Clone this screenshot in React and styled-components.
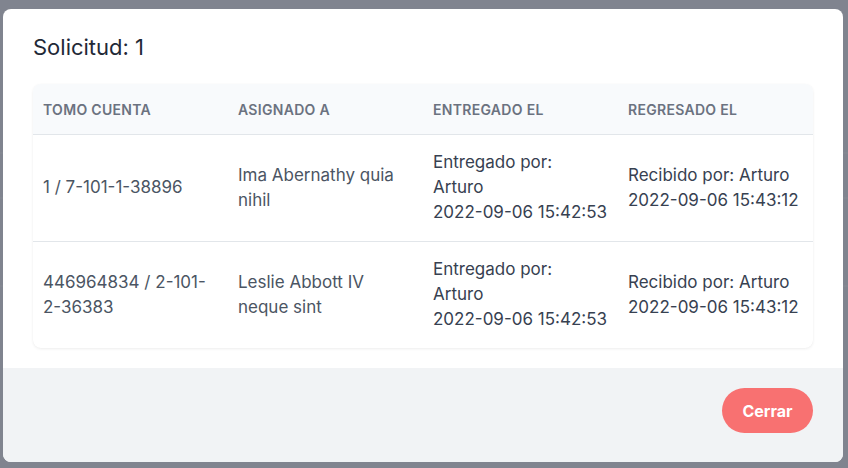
import React from "react";
import styled, { createGlobalStyle } from "styled-components";

const GlobalStyle = createGlobalStyle`
  html, body { margin: 0; padding: 0; width: 848px; height: 468px; overflow: hidden; }
  body { font-family: Inter, "Noto Sans", sans-serif; -webkit-font-smoothing: antialiased; }
  * { box-sizing: border-box; }
`;

const Page = styled.div`
  width: 848px;
  height: 468px;
  background: #e9ebef;
  display: flex;
  flex-direction: column;
  padding-top: 152px;
`;

const BgRow = styled.div`
  height: ${(p) => p.$h}px;
  border-bottom: 2px solid #ffffff;
`;

const Overlay = styled.div`
  position: fixed;
  inset: 0;
  background: rgba(107, 112, 124, 0.84);
  padding: 9px 0 0 3px;
`;

const Modal = styled.div`
  width: 840px;
  height: 453px;
  background: #ffffff;
  border-radius: 8px;
  overflow: hidden;
  display: flex;
  flex-direction: column;
`;

const Body = styled.div`
  padding: 24px 30px 20px;
`;

const Title = styled.h3`
  margin: 0 0 23px;
  font-size: 22px;
  line-height: 28px;
  font-weight: 400;
  color: #1f2937;
`;

const Card = styled.div`
  width: 780px;
  border-radius: 8px;
  overflow: hidden;
  background: #ffffff;
  box-shadow: 0 1px 3px rgba(0, 0, 0, 0.07), 0 0 1px rgba(0, 0, 0, 0.04);
`;

const Table = styled.table`
  width: 780px;
  table-layout: fixed;
  border-collapse: collapse;
`;

const Th = styled.th`
  width: 195px;
  text-align: left;
  padding: 16px 10px 14px;
  line-height: 20px;
  font-size: 14px;
  font-weight: 600;
  letter-spacing: 0.3px;
  text-transform: uppercase;
  color: #6b7280;
  background: #f8fafc;
  border-bottom: 1px solid #e2e6ea;
`;

const Tr = styled.tr`
  border-bottom: 1px solid #e2e6ea;
  &:last-child { border-bottom: none; }
`;

const Td = styled.td`
  padding: 15px 15px 16px 10px;
  vertical-align: middle;
  font-size: 17px;
  line-height: 25px;
  color: ${(p) => (p.$dark ? "#374151" : "#4b5563")};
`;

const Stamp = styled.span`
  display: block;
  white-space: nowrap;
`;

const Footer = styled.div`
  flex: 1;
  background: #f1f3f5;
  display: flex;
  justify-content: flex-end;
  align-items: flex-start;
  padding: 20px 30px 30px;
`;

const Button = styled.button`
  height: 45px;
  width: 91px;
  border: none;
  border-radius: 999px;
  background: #f87171;
  color: #ffffff;
  font-family: inherit;
  font-size: 16px;
  font-weight: 700;
  cursor: pointer;
`;

const rows = [
  {
    tomo: "1 / 7-101-1-38896",
    asignado: "Ima Abernathy quia nihil",
    entregado: "Arturo",
    fechaE: "2022-09-06 15:42:53",
    recibido: "Arturo",
    fechaR: "2022-09-06 15:43:12",
  },
  {
    tomo: "446964834 / 2-101-2-36383",
    asignado: "Leslie Abbott IV neque sint",
    entregado: "Arturo",
    fechaE: "2022-09-06 15:42:53",
    recibido: "Arturo",
    fechaR: "2022-09-06 15:43:12",
  },
];

export default function App() {
  return (
    <>
      <GlobalStyle />
      <Page>
        <BgRow $h={0} />
        <BgRow $h={45} />
        <BgRow $h={88} />
      </Page>
      <Overlay>
        <Modal>
          <Body>
            <Title>Solicitud: 1</Title>
            <Card>
              <Table>
                <thead>
                  <tr>
                    <Th>Tomo cuenta</Th>
                    <Th>Asignado a</Th>
                    <Th>Entregado el</Th>
                    <Th>Regresado el</Th>
                  </tr>
                </thead>
                <tbody>
                  {rows.map((r, i) => (
                    <Tr key={i}>
                      <Td>{r.tomo}</Td>
                      <Td>{r.asignado}</Td>
                      <Td $dark>
                        Entregado por: {r.entregado}
                        <Stamp>{r.fechaE}</Stamp>
                      </Td>
                      <Td $dark>
                        Recibido por: {r.recibido}
                        <Stamp>{r.fechaR}</Stamp>
                      </Td>
                    </Tr>
                  ))}
                </tbody>
              </Table>
            </Card>
          </Body>
          <Footer>
            <Button>Cerrar</Button>
          </Footer>
        </Modal>
      </Overlay>
    </>
  );
}
